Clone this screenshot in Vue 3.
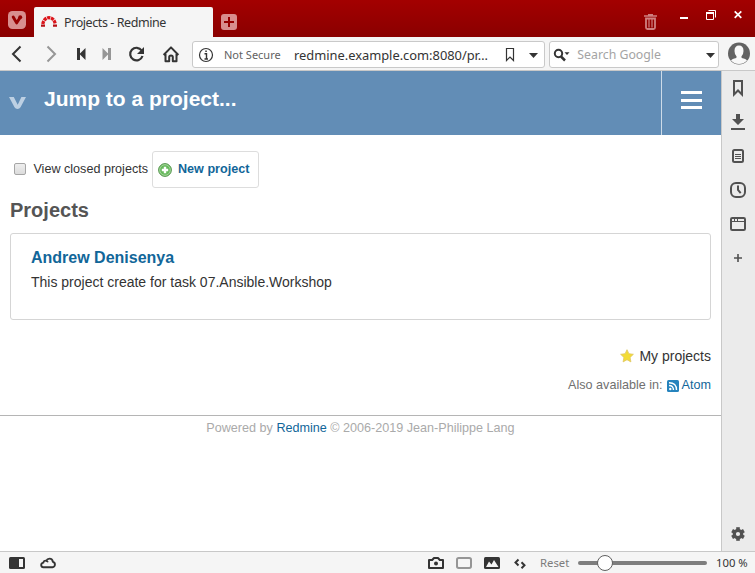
<script setup>
import { ref } from 'vue'

const closed = ref(false)
const zoom = ref(14.5)
</script>

<template>
  <div class="browser">
    <header class="tabs">
      <svg class="brand" width="34" height="37" viewBox="0 0 34 37">
        <rect x="8" y="11" width="18" height="18" rx="4.5" fill="#d88e8e" />
        <path d="M13.200 17 16.600 22.900 19.800 18" fill="none" stroke="#960000" stroke-width="2.900" stroke-linecap="round" stroke-linejoin="round" />
        <circle cx="20.200" cy="17.200" r="2" fill="#960000" />
      </svg>
      <div class="tab">
        <svg width="30" height="30" viewBox="34 7 30 30">
          <path d="M41 26.700v-2.200h4v2.200zM53 26.700v-2.200h4v2.200z" fill="#b51016" />
          <path d="M42.800 24C44 15.500 54 15.500 55.200 24" fill="none" stroke="#dc151b" stroke-width="3.300" stroke-dasharray="3.200 .7" />
        </svg>
        <span class="title">Projects - Redmine</span>
      </div>
      <svg width="32" height="37" viewBox="213 0 32 37">
        <rect x="221" y="14" width="16" height="16" rx="3" fill="#d88e8e" />
        <path d="M229 17v10M224 22h10" stroke="#960000" stroke-width="2" />
      </svg>
      <div class="grow"></div>
      <svg width="115" height="37" viewBox="640 0 115 37">
        <path d="M644 16h13M648 14.7h5" stroke="#cf8080" stroke-width="1.6" />
        <path d="M646 18.500v9q0 1.500 1.500 1.500h6q1.500 0 1.500-1.500v-9z" fill="none" stroke="#cf8080" stroke-width="1.8" />
        <path d="M649 18.500v9M652 18.500v9" stroke="#cf8080" stroke-width="1.200" />
        <path d="M680 18h8" stroke="#fff" stroke-width="2" />
        <path d="M706.500 13v6.500h7v-6.500M708.500 10.500h7v7" fill="none" stroke="#fff" />
        <path d="M706 13h8" stroke="#fff" stroke-width="2" />
        <path d="M734.700 11.300l6.600 6.600m0-6.600l-6.600 6.600" stroke="#fff" stroke-width="1.700" />
      </svg>
    </header>

    <div class="toolbar">
      <svg width="192" height="33" viewBox="0 37 192 33" fill="none" stroke="#343434" stroke-width="2">
        <path d="M20.500 46.500 13 54l7.500 7.500" />
        <path d="M47.500 46.500 55 54l-7.500 7.500" stroke="#969696" />
        <path d="M78.500 48v12" stroke-width="3" /><path d="M85.500 48v12l-6-6z" fill="#343434" stroke="none" />
        <path d="M109.500 48v12" stroke="#969696" stroke-width="3" /><path d="M102.500 48v12l6-6z" fill="#969696" stroke="none" />
        <path d="M141.700 50.500A6.300 6.300 0 1 0 142.500 56" stroke-width="2.200" />
        <path d="M144 47v7h-7z" fill="#343434" stroke="none" />
        <path d="M163.600 55 171 47.400l7.400 7.600M165.500 54v7.200h3.700V57q0-1.500 1.800-1.500t1.800 1.500v4.200h3.700V54" stroke-linejoin="round" />
      </svg>
      <div class="field address">
        <svg width="31" height="24" viewBox="193 42 31 24">
          <circle cx="206" cy="54" r="6.500" fill="none" stroke="#343434" stroke-width="1.200" />
          <path d="M204.500 52.800h2v5M204.500 58h3.500M205.300 50.200h1.500" fill="none" stroke="#343434" stroke-width="1.400" />
        </svg>
        <span class="secure">Not Secure</span>
        <span class="url">redmine.example.com:8080/pr…</span>
        <svg width="45" height="24" viewBox="499 42 45 24">
          <path d="M505.500 47.500h7v12l-3.500-3.500-3.500 3.500z" fill="none" stroke="#343434" stroke-width="1.200" />
          <path d="M528 52h9l-4.500 5z" fill="#343434" />
        </svg>
      </div>
      <div class="field search">
        <svg width="27" height="24" viewBox="550 42 27 24">
          <circle cx="558.500" cy="52.500" r="3.700" fill="none" stroke="#343434" stroke-width="2" />
          <path d="m561 55.500 4 4" stroke="#343434" stroke-width="2.500" />
          <path d="M564.500 51.300h5l-2.500 2.700z" fill="#343434" />
        </svg>
        <span class="hint">Search Google</span>
        <svg width="18" height="24" viewBox="699 42 18 24"><path d="M705 52h9l-4.500 5z" fill="#343434" /></svg>
      </div>
      <svg width="36" height="33" viewBox="719 37 36 33">
        <circle cx="739" cy="53.500" r="11" fill="#626262" />
        <path d="M731 60.500q1-1.800 5.300-2.500l.3-1.500q-2.100-2-2.100-5.500 0-5.500 4.500-5.500t4.500 5.500q0 3.500-2.100 5.500l.3 1.500q4.300.700 5.300 2.500-3.400 3.500-8 3.500t-8-3.500z" fill="#f8f8f8" />
      </svg>
    </div>

    <div class="middle">
      <main class="page">
        <div class="banner">
          <svg width="44" height="64" viewBox="0 71 44 64"><path d="M9 97h4.800l3.900 7.800L21.400 97H26l-5.500 10.300q-1 1.700-3 1.700t-3-1.700z" fill="#bdd0e3" /></svg>
          <h1>Jump to a project...</h1>
          <button class="menu" aria-label="Menu"><i></i><i></i><i></i></button>
        </div>

        <section class="content">
          <div class="actions">
            <label><input v-model="closed" type="checkbox" />View closed projects</label>
            <a class="new">
              <svg width="14" height="14" viewBox="0 0 14 14">
                <circle cx="7" cy="7" r="6.400" fill="#65b95a" stroke="#5b9653" />
                <circle cx="7" cy="7" r="5.300" fill="none" stroke="#a6d59e" />
                <path d="M7 3.800v6.400M3.800 7h6.400" stroke="#fff" stroke-width="2.400" />
              </svg>
              <span>New project</span>
            </a>
          </div>
          <h2>Projects</h2>
          <article class="card">
            <h3>Andrew Denisenya</h3>
            <p>This project create for task 07.Ansible.Workshop</p>
          </article>
          <div class="mine">
            <svg width="14" height="14" viewBox="0 0 14 14"><path d="m7 .7 1.900 4 4.500.6-3.300 3.100.8 4.500L7 10.700l-3.900 2.200.8-4.500L.6 5.300l4.500-.6z" fill="#f3dc35" stroke="#dfc765" stroke-width=".8" /></svg>
            <span>My projects</span>
          </div>
          <div class="feeds">
            Also available in:
            <svg width="12" height="12" viewBox="0 0 12 12">
              <rect width="12" height="12" rx="1.500" fill="#2583bd" />
              <circle cx="3.300" cy="9" r="1.200" fill="#fff" />
              <path d="M2 5.500q4.500 0 4.500 4.500M2 2.700q7.500 0 7.500 7.300" fill="none" stroke="#fff" stroke-width="1.400" />
            </svg>
            <a>Atom</a>
          </div>
        </section>
        <footer>Powered by <a>Redmine</a> © 2006-2019 Jean-Philippe Lang</footer>
      </main>

      <aside class="panel">
        <svg width="33" height="200" viewBox="722 71 33 200" fill="none" stroke="#515151" stroke-width="2">
          <path d="M734 81h8v13.500l-4-4-4 4z" />
          <path d="M731 129h14" /><path d="M736 114h4v5h4l-6 6-6-6h4z" fill="#515151" stroke="none" />
          <rect x="733" y="150" width="10" height="12" rx="1.500" /><path d="M735 154.500h6M735 156.500h6M735 158.500h6" stroke-width="1" />
          <rect x="731" y="183" width="14" height="14" rx="5" /><path d="M738 185.500v4.500l2.700 3.200" />
          <rect x="731" y="218" width="14" height="12" rx="1.300" /><path d="M731 221.500h14M734.500 218v3M737.500 218v3" stroke-width="1" />
          <path d="M738 254v8M734 258h8" stroke-width="1.600" />
        </svg>
        <svg width="33" height="34" viewBox="722 517 33 34">
          <circle cx="738" cy="534" r="3.700" fill="none" stroke="#515151" stroke-width="3.200" />
          <path v-for="a in 6" :key="a" d="M736.200 527.200h3.600v3h-3.600z" fill="#515151" :transform="`rotate(${a * 60} 738 534)`" />
        </svg>
      </aside>
    </div>

    <div class="status">
      <svg width="70" height="21" viewBox="0 552 70 21">
        <rect x="9" y="557" width="16" height="12" rx="1.500" fill="#343434" /><path d="M19 559h4v8h-4z" fill="#f5f5f5" />
        <path d="M43.300 567.200h9.200a2.700 2.700 0 0 0 .4-5.300q-.5-3.300-3.400-3.300-2.200 0-3.200 2.100-2.600-.4-2.900 1.900-2.300.6-2.200 2.500.2 2 2.100 2.100z" fill="none" stroke="#343434" stroke-width="1.900" stroke-linejoin="round" />
        <path d="M46 560.700q1.600.3 2 1.600" fill="none" stroke="#343434" stroke-width="1.500" />
      </svg>
      <div class="grow"></div>
      <svg width="116" height="21" viewBox="424 552 116 21">
        <path d="M429 560h3.200l1.800-2h4l1.800 2h3.200v8h-14z" fill="none" stroke="#343434" stroke-width="2" stroke-linejoin="round" />
        <circle cx="436" cy="563.500" r="2" fill="#343434" />
        <rect x="457" y="558" width="14" height="10" rx="1.700" fill="none" stroke="#969696" stroke-width="2" />
        <rect x="484" y="557" width="16" height="12" rx="1.500" fill="#343434" />
        <path d="m486 567 3-5.500 2.500 3 2.500-4.500 4.500 7z" fill="#f5f5f5" />
        <path d="m518.500 559.500-3 3 3 3m3-3.200 3 3-3 3" fill="none" stroke="#343434" stroke-width="2" />
      </svg>
      <span class="reset">Reset</span>
      <div class="slider">
        <div class="knob" :style="{ marginLeft: zoom + '%' }"></div>
      </div>
      <span class="percent">100 %</span>
    </div>
  </div>
</template>

<style>
body { margin: 0; overflow: hidden; }
</style>

<style scoped>
* { box-sizing: border-box; }
svg { display: block; flex: none; }
.browser { width: 755px; height: 573px; display: flex; flex-direction: column; background: #fff; font-family: "Liberation Sans", Arial, sans-serif; white-space: nowrap; }
.grow { flex: 1; }
.tabs { height: 37px; display: flex; flex: none; background: linear-gradient(#a30000, #8a0000); }
.tab { width: 179px; height: 30px; margin-top: 7px; display: flex; align-items: center; background: #f5f5f5; border-radius: 2px 2px 0 0; }
.title { padding-top: 1px; font: 12.500px/30px "Noto Sans", sans-serif; color: #343434; letter-spacing: -.42px; }
.toolbar { height: 34px; display: flex; flex: none; background: #f5f5f5; border-bottom: 1px solid #c8c8c8; }
.field { height: 27px; margin-top: 4px; border: 1px solid #c9c9c9; border-radius: 3px; background: #fff; display: flex; align-items: center; font: 12px/24px "Noto Sans", sans-serif; }
.address { width: 353px; }
.address svg:last-child { margin-right: -1px; }
.search { width: 170px; margin-left: 4px; }
.address { width: 354px; }
.secure { width: 70px; font-size: 11px; color: #626262; }
.url { flex: 1; font-size: 12.900px; letter-spacing: -.02px; color: #343434; }
.hint { flex: 1; font-size: 12.300px; color: #a4a4a4; }
.middle { height: 480px; display: flex; flex: none; }
.page { width: 721px; color: #333; }
.banner { height: 64px; display: flex; background: #628db6; }
h1 { flex: 1; margin: 15px 0 0; font-size: 21px; line-height: 26px; color: #fff; }
.menu { width: 60px; padding: 0 0 6px; border: 0; border-left: 1px solid #cddbe8; background: none; display: flex; flex-direction: column; align-items: center; justify-content: center; gap: 4.500px; }
.menu i { display: block; width: 21px; height: 3px; background: #fff; }
.content { height: 280px; padding: 16px 10px 0; }
.actions { height: 37px; display: flex; align-items: center; gap: 4px; font-size: 12.600px; }
label { display: flex; align-items: center; height: 35px; width: 138px; padding-bottom: 1px; }
input { appearance: none; width: 12px; height: 12px; margin: 0 7.500px 0 4px; border: 1px solid #a6a6a6; border-radius: 2px; background: linear-gradient(#eee, #dcdcdc); }
.new { height: 37px; width: 107px; padding-left: 5px; display: flex; align-items: center; gap: 6px; border: 1px solid #ddd; border-radius: 3px; font-weight: bold; }
.new span { padding-bottom: 2px; }
a { color: #169; }
h2 { margin: 9px 0 10px; font-size: 20px; line-height: 26px; color: #555; }
.card { height: 87px; padding: 13px 20px; border: 1px solid #d5d5d5; border-radius: 3px; }
h3 { margin: 0; font-size: 16px; line-height: 22px; color: #169; }
.card p { margin: 3px 0 0; font-size: 14px; line-height: 21px; }
.mine { margin-top: 26px; height: 20px; display: flex; align-items: center; justify-content: flex-end; gap: 5px; font-size: 14px; }
.feeds { margin-top: 10px; height: 18px; display: flex; align-items: center; justify-content: flex-end; gap: 3px; font-size: 12.600px; color: #707070; }
.feeds svg { margin: 1px 0 0 1px; }
footer { border-top: 1px solid #b5b5b5; text-align: center; font-size: 12.600px; line-height: 24px; color: #aaa; }
.panel { width: 34px; background: #ebebeb; border-left: 1px solid #c8c8c8; display: flex; flex-direction: column; justify-content: space-between; }
.status { height: 22px; display: flex; flex: none; align-items: center; background: #f5f5f5; border-top: 1px solid #c8c8c8; font: 11px/21px "Noto Sans", sans-serif; }
.reset { width: 38px; color: #7c7c7c; font-size: 11.300px; }
.slider { width: 129px; height: 4px; border-radius: 2px; background: #7e7e7e; display: flex; align-items: center; }
.knob { flex: none; width: 16px; height: 16px; border: 1px solid #606060; border-radius: 50%; background: #fff; }
.percent { width: 48px; padding-left: 9px; color: #343434; font-size: 11.300px; }
</style>
